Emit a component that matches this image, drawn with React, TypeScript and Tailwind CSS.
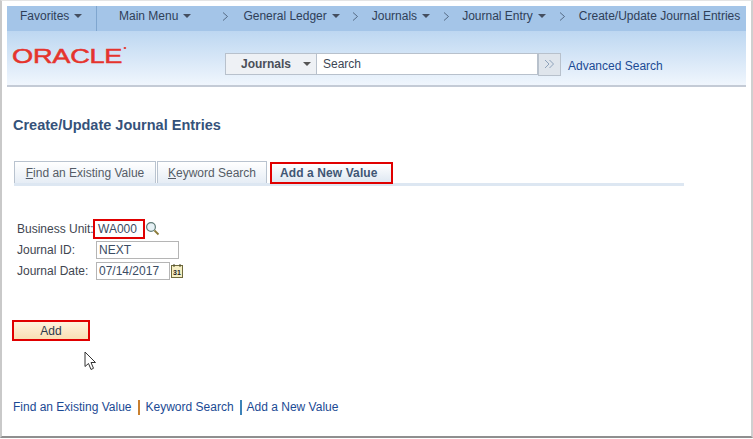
import React from 'react'

const Caret = () => (
  <span className="inline-block ml-[5px] mb-[1px] w-0 h-0 border-x-[4px] border-x-transparent border-t-[4px] border-t-[#444f60]" />
)

const Sep = ({ className }: { className: string }) => (
  <svg className={className} width="7" height="9" viewBox="0 0 7 9" fill="none">
    <path d="M1 0.5 L5.5 4.5 L1 8.5" stroke="#4d6078" strokeWidth="0.9" />
  </svg>
)

const NavLabel = ({ children, className }: { children: React.ReactNode; className: string }) => (
  <span className={`flex items-center whitespace-nowrap ${className}`}>{children}</span>
)

const Crumbs = () => (
  <div className="h-[25px] bg-[#a4c5e8] flex items-center text-[12px] text-[#2f4058]">
    <NavLabel className="pl-[13px] w-[90px] h-full border-r border-r-[#7fa6cf] pb-[5px]">
      Favorites
      <Caret />
    </NavLabel>
    <div className="flex items-center pb-[5px]">
      <NavLabel className="ml-[22px]">
        Main Menu
        <Caret />
      </NavLabel>
      <Sep className="ml-[31px]" />
      <NavLabel className="ml-[14px]">
        General Ledger
        <Caret />
      </NavLabel>
      <Sep className="ml-[12px]" />
      <NavLabel className="ml-[13px]">
        Journals
        <Caret />
      </NavLabel>
      <Sep className="ml-[13px]" />
      <NavLabel className="ml-[12px]">
        Journal Entry
        <Caret />
      </NavLabel>
      <Sep className="ml-[13px]" />
      <NavLabel className="ml-[13px]">Create/Update Journal Entries</NavLabel>
    </div>
  </div>
)

const OracleLogo = () => (
  <span className="relative text-[#e5342d] text-[20px] leading-none tracking-[-0.2px] scale-x-[1.36] origin-left inline-block [-webkit-text-stroke:0.5px_#e5342d]">
    ORACLE
    <span className="absolute right-[-3px] top-[1px] w-[2px] h-[2px] rounded-full bg-[#e5342d]" />
  </span>
)

const SearchBar = () => (
  <div className="flex items-center ml-[113px] mt-[12px]">
    <div className="w-[92px] h-[22px] bg-[#eef1f5] border border-[#b8c1cc] flex items-center text-[12px] font-bold text-[#4a4f59]">
      <span className="ml-[15px]">Journals</span>
      <span className="ml-[12px] w-0 h-0 border-x-[4px] border-x-transparent border-t-[4px] border-t-[#555]" />
    </div>
    <div className="w-[221px] h-[22px] bg-white border border-l-0 border-[#b8c1cc] flex items-center pl-[6px] text-[12px] text-[#3c4654]">
      Search
    </div>
    <div className="w-[23px] h-[23px] bg-[#dfe5ec] border border-[#b8c1cc] flex items-center justify-center">
      <svg width="11" height="10" viewBox="0 0 11 10" fill="none">
        <path d="M1 1 L5 5 L1 9 M5.5 1 L9.5 5 L5.5 9" stroke="#8fa3bb" strokeWidth="1" />
      </svg>
    </div>
    <a className="ml-[7px] mt-[3px] text-[12px] text-[#1b4a94] whitespace-nowrap">Advanced Search</a>
  </div>
)

const Tab = ({ first, rest, w }: { first: string; rest: string; w: string }) => (
  <div className={`${w} h-[22px] bg-gradient-to-b from-[#ffffff] to-[#e6edf5] border border-b-0 border-[#b9c3cf] flex items-center justify-center text-[12px] text-[#555c66]`}>
    <span>
      <span className="underline">{first}</span>
      {rest}
    </span>
  </div>
)

const Field = ({ label, value, w }: { label: string; value: string; w: string }) => (
  <div className="flex items-center h-[21px]">
    <span className="w-[79px] text-[#3f4650]">{label}</span>
    <div className={`${w} h-[18px] border border-[#b5b5b5] flex items-center pl-[2px] text-[#3b4c63]`}>{value}</div>
  </div>
)

const Magnifier = () => (
  <svg width="15" height="15" viewBox="0 0 15 15" fill="none">
    <circle cx="6" cy="6" r="4.4" fill="#e6f1f5" stroke="#5f7c78" strokeWidth="1.2" />
    <path d="M9.5 9.5 L13.5 13.5" stroke="#8a7a38" strokeWidth="1.8" />
  </svg>
)

const CalendarIcon = () => (
  <svg className="ml-[1px]" width="12" height="14" viewBox="0 0 12 14" fill="none">
    <rect x="0.5" y="1.5" width="11" height="12" fill="#f6efc4" stroke="#6f6a3c" />
    <path d="M3 0 V3 M9 0 V3" stroke="#4c4a2c" />
    <text x="6" y="11" textAnchor="middle" fontSize="7" fontWeight="700" fill="#222" fontFamily="Liberation Sans">31</text>
  </svg>
)

const App = () => {
  return (
    <div className="w-[753px] h-[439px] bg-white overflow-hidden font-['Liberation_Sans',Arial,sans-serif] text-[12px]">
      <div className="w-[753px] h-[438px] border-t border-t-[#e4e4e4] border-l-2 border-l-[#c9c9c9] border-r-2 border-r-[#cfcfcf] border-b-2 border-b-[#8f8f8f] pl-[5px] pr-[5px] pt-[5px]">
        <Crumbs />
        <div className="h-[56px] bg-gradient-to-b from-[#bdd7f1] to-[#f0f6fd] border-b-2 border-b-[#c4cbd6] flex items-center">
          <div className="w-[100px] ml-[5px] mb-[3px]">
            <OracleLogo />
          </div>
          <SearchBar />
        </div>

        <div className="pl-[6px]">
          <h1 className="mt-[30px] text-[14.5px] leading-[16px] font-bold text-[#35527a]">Create/Update Journal Entries</h1>

          <div className="mt-[30px] ml-px w-[670px] h-[23px] border-b-[3px] border-b-[#dde7f2] flex items-end gap-px">
            <Tab first="F" rest="ind an Existing Value" w="w-[142px]" />
            <Tab first="K" rest="eyword Search" w="w-[110px]" />
            <div className="ml-[2px] w-[123px] h-[22px] mb-[-1px] bg-gradient-to-b from-[#ffffff] to-[#dfe8f2] border-2 border-[#e00000] flex items-center pl-[8px] font-bold text-[#3f5675] tracking-[0.1px]">
              Add a New Value
            </div>
          </div>

          <div className="mt-[32px] ml-[4px]">
            <div className="flex items-center h-[21px]">
              <span className="text-[#3f4650] w-[76px] whitespace-nowrap">Business Unit:</span>
              <div className="w-[52px] h-[20px] border-2 border-[#e00000] flex items-center pl-[3px] text-[#3b4c63]">WA000</div>
              <Magnifier />
            </div>
            <Field label="Journal ID:" value="NEXT" w="w-[83px]" />
            <div className="flex items-center">
              <Field label="Journal Date:" value="07/14/2017" w="w-[74px]" />
              <CalendarIcon />
            </div>
          </div>

          <button className="block mt-[39px] ml-[-1px] w-[78px] h-[21px] border-2 border-[#e00000] bg-gradient-to-b from-[#fff3dc] to-[#f9dfb4] text-[12px] text-[#2e3a4c]">
            Add
          </button>

          <svg className="ml-[71px] mt-[10px]" width="13" height="20" viewBox="0 0 13 20" fill="none">
            <path d="M1 1 V15.5 L4.5 12.5 L7 18.5 L9.5 17.3 L7 11.5 L11.5 11.5 Z" fill="#fff" stroke="#333" strokeWidth="1" />
          </svg>

          <div className="mt-[27px] flex items-center text-[12px] text-[#1b4a94] whitespace-nowrap">
            <a>Find an Existing Value</a>
            <span className="mx-[6px] w-[2px] h-[15px] bg-[#c9802f]" />
            <a>Keyword Search</a>
            <span className="ml-[6px] mr-[5px] w-[2px] h-[15px] bg-[#3d83b8]" />
            <a>Add a New Value</a>
          </div>
        </div>
      </div>
    </div>
  )
}

export default App
